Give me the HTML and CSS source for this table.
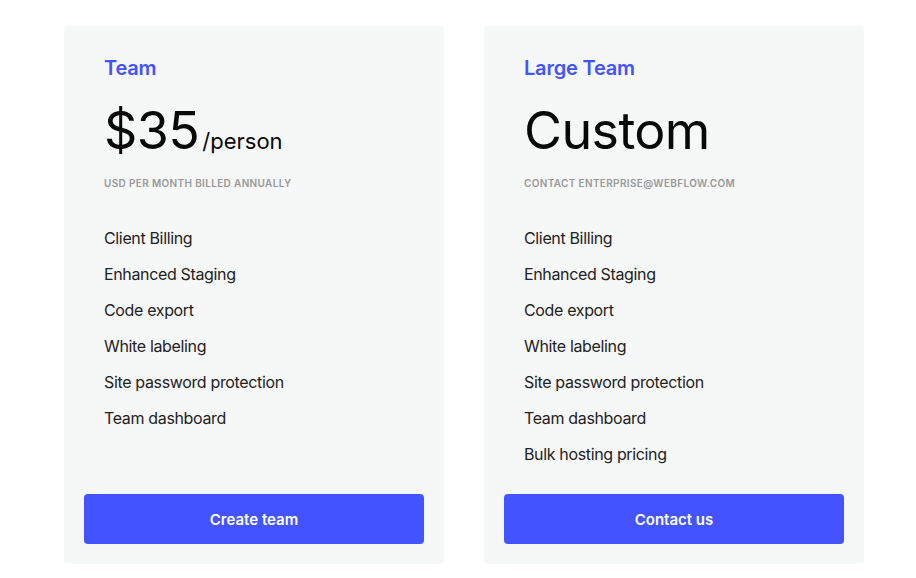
FILE: index.html
```html
<!DOCTYPE html>
<html lang="en">
<head>
  <meta charset="UTF-8">
  <meta name="viewport" content="width=device-width, initial-scale=1.0">
  <title>Pricing</title>
  <link rel="stylesheet" href="styles.css">
</head>
<body>
  <div class="plans">
    <div class="plan">
      <div class="plan-body">
        <h2 class="plan-name">Team</h2>
        <div class="plan-price">$35<span class="per">/person</span></div>
        <p class="plan-note">USD per month billed annually</p>
        <ul class="features">
          <li>Client Billing</li>
          <li>Enhanced Staging</li>
          <li>Code export</li>
          <li>White labeling</li>
          <li>Site password protection</li>
          <li>Team dashboard</li>
        </ul>
      </div>
      <button class="plan-button">Create team</button>
    </div>

    <div class="plan">
      <div class="plan-body">
        <h2 class="plan-name">Large Team</h2>
        <div class="plan-price">Custom</div>
        <p class="plan-note">Contact enterprise@webflow.com</p>
        <ul class="features">
          <li>Client Billing</li>
          <li>Enhanced Staging</li>
          <li>Code export</li>
          <li>White labeling</li>
          <li>Site password protection</li>
          <li>Team dashboard</li>
          <li>Bulk hosting pricing</li>
        </ul>
      </div>
      <button class="plan-button">Contact us</button>
    </div>
  </div>
</body>
</html>
```

FILE: styles.css
```css
/* General styles */
* {
  margin: 0;
  padding: 0;
  box-sizing: border-box;
  font-family: Inter, "Noto Sans", sans-serif;
}

body {
  background-color: #fff;
  color: #222;
}

/* Plan cards */
.plans {
  display: flex;
  gap: 40px;
  padding: 26px 52px 0 64px;
}

.plan {
  display: flex;
  flex-direction: column;
  width: 380px;
  height: 538px;
  padding: 28px 20px 20px;
  background-color: #f6f7f7;
  border-radius: 4px;
}

.plan-body {
  padding: 0 20px;
}

.plan-name {
  font-size: 20px;
  line-height: 28px;
  font-weight: 600;
  letter-spacing: -0.2px;
  color: #4353ff;
}

.plan-price {
  margin-top: 19px;
  font-size: 52px;
  line-height: 60px;
  font-weight: 400;
  color: #080808;
  letter-spacing: -0.6px;
}

.plan-price .per {
  margin-left: 3px;
  font-size: 22px;
  line-height: 1;
  letter-spacing: 0;
}

.plan-note {
  margin-top: 15px;
  font-size: 10px;
  line-height: 14px;
  font-weight: 600;
  letter-spacing: 0.35px;
  text-transform: uppercase;
  color: #999;
}

.features {
  margin-top: 30px;
  list-style: none;
}

.features li {
  font-size: 16px;
  line-height: 36px;
  letter-spacing: -0.35px;
  color: #222;
}

.plan-button {
  margin-top: auto;
  height: 50px;
  border: none;
  border-radius: 4px;
  background-color: #4353ff;
  color: #fff;
  font-size: 15px;
  font-weight: 600;
  cursor: pointer;
}
```
